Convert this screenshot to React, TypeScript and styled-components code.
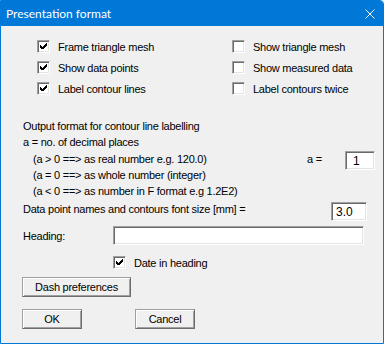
import React from 'react'
import styled, { createGlobalStyle } from 'styled-components'

const GlobalStyle = createGlobalStyle`
  html, body {
    margin: 0;
    padding: 0;
    background: #ffffff;
  }
  body {
    font-family: "Liberation Sans", Arial, sans-serif;
    font-size: 11px;
    letter-spacing: -0.25px;
    color: #000;
  }
`

const Window = styled.div`
  width: 384px;
  height: 344px;
  box-sizing: border-box;
  border: 1px solid #0078d7;
  border-top-right-radius: 4px;
  overflow: hidden;
  background: #f0f0f0;
  display: flex;
  flex-direction: column;
`

const TitleBar = styled.div`
  height: 25px;
  flex: none;
  background: #0078d7;
  color: #fff;
  display: flex;
  align-items: center;
  justify-content: space-between;
  padding: 0 8px 0 5px;
  font-family: Lato, "Noto Sans", sans-serif;
  font-size: 12px;
  letter-spacing: 0;
`

const CloseIcon = styled.svg`
  width: 10px;
  height: 10px;
  display: block;
`

const Body = styled.div`
  display: flex;
  flex-direction: column;
  padding: 10px 0 0 21px;
`

const CheckGrid = styled.div`
  display: grid;
  grid-template-columns: 195px auto;
  grid-auto-rows: 21px;
  padding-left: 15px;
`

const CheckItem = styled.label`
  display: flex;
  align-items: center;
  gap: 8px;
  white-space: nowrap;
`

const Box = styled.span`
  width: 13px;
  height: 13px;
  flex: none;
  box-sizing: border-box;
  background: #fff;
  border: 1px solid;
  border-color: #a0a0a0 #fff #fff #a0a0a0;
  box-shadow: inset 1px 1px #696969, inset -1px -1px #e3e3e3;
  display: flex;
  align-items: center;
  justify-content: center;
`

const TextBlock = styled.div`
  display: flex;
  flex-direction: column;
  margin-top: 19px;
`

const Line = styled.div<{ $h: number; $indent?: number }>`
  height: ${p => p.$h}px;
  line-height: ${p => p.$h}px;
  padding-left: ${p => p.$indent ?? 1}px;
  white-space: nowrap;
`

const ParamRow = styled.div`
  display: grid;
  grid-template-columns: 274px 38px 30px;
  height: 17px;
  line-height: 17px;
  padding-left: 11px;
  white-space: nowrap;
`

const SizeRow = styled.div`
  display: grid;
  grid-template-columns: 308px 36px;
  height: 19px;
  line-height: 19px;
  padding-left: 1px;
  white-space: nowrap;
`

const HeadingRow = styled.div`
  display: grid;
  grid-template-columns: 90px 251px;
  align-items: center;
  height: 19px;
  margin-top: 7px;
  padding-left: 1px;
`

const DateRow = styled.div`
  display: flex;
  height: 21px;
  margin-top: 7px;
  padding-left: 91px;
`

const Field = styled.input<{ $w?: number; $shift?: number; $pad?: number }>`
  width: ${p => (p.$w ? `${p.$w}px` : '100%')};
  height: 19px;
  margin: ${p => p.$shift ?? 0}px 0 0 0;
  align-self: start;
  box-sizing: border-box;
  background: #fff;
  border: 1px solid;
  border-color: #a0a0a0 #fff #fff #a0a0a0;
  box-shadow: inset 1px 1px #696969, inset -1px -1px #e3e3e3;
  padding: 0 0 0 ${p => p.$pad ?? 4}px;
  font-family: "Liberation Sans", Arial, sans-serif;
  font-size: 12px;
  color: #000;
  outline: none;
`

const Button = styled.button<{ $w: number }>`
  width: ${p => p.$w}px;
  height: 20px;
  box-sizing: border-box;
  background: #f0f0f0;
  border: 1px solid #6d6d6d;
  border-top-color: #a0a0a0;
  border-left-color: #a0a0a0;
  box-shadow: inset 1px 1px #fff, inset -1px -1px #a0a0a0;
  padding: 0;
  font-family: "Liberation Sans", Arial, sans-serif;
  font-size: 11px;
  letter-spacing: -0.25px;
  color: #000;
`

const DashButton = styled(Button)`
  margin-top: 4px;
`

const ButtonRow = styled.div`
  display: flex;
  gap: 53px;
  margin-top: 12px;
`

function Check({ checked, children }: { checked?: boolean; children?: React.ReactNode }) {
  return (
    <CheckItem>
      <Box>
        {checked && (
          <svg width="7" height="7" viewBox="0 0 7 7" shapeRendering="crispEdges">
            <path d="M0 2h1v1h-1zM0 3h2v1h-2zM0 4h3v1h-3zM1 5h3v1h-3zM2 6h1v-3h1v-1h1v-1h1v-1h1v3h-1v1h-1v1h-1v1h-2z" fill="#000" />
          </svg>
        )}
      </Box>
      {children}
    </CheckItem>
  )
}

export default function App() {
  return (
    <>
      <GlobalStyle />
      <Window>
        <TitleBar>
          <span>Presentation format</span>
          <CloseIcon viewBox="0 0 10 10">
            <path d="M0.5 0.5L9.5 9.5M9.5 0.5L0.5 9.5" stroke="#fff" strokeWidth="1" />
          </CloseIcon>
        </TitleBar>
        <Body>
          <CheckGrid>
            <Check checked>Frame triangle mesh</Check>
            <Check>Show triangle mesh</Check>
            <Check checked>Show data points</Check>
            <Check>Show measured data</Check>
            <Check checked>Label contour lines</Check>
            <Check>Label contours twice</Check>
          </CheckGrid>
          <TextBlock>
            <Line $h={16}>Output format for contour line labelling</Line>
            <Line $h={17}>a = no. of decimal places</Line>
            <ParamRow>
              <span>(a &gt; 0 ==&gt; as real number e.g. 120.0)</span>
              <span>a =</span>
              <Field $w={30} $pad={7} defaultValue="1" readOnly />
            </ParamRow>
            <Line $h={15} $indent={11}>(a = 0 ==&gt; as whole number (integer)</Line>
            <Line $h={17} $indent={11}>(a &lt; 0 ==&gt; as number in F format e.g 1.2E2)</Line>
            <SizeRow>
              <span>Data point names and contours font size [mm] =</span>
              <Field $w={36} $shift={2} defaultValue="3.0" readOnly />
            </SizeRow>
          </TextBlock>
          <HeadingRow>
            <span>Heading:</span>
            <Field defaultValue="" readOnly />
          </HeadingRow>
          <DateRow>
            <Check checked>Date in heading</Check>
          </DateRow>
          <DashButton $w={109}>Dash preferences</DashButton>
          <ButtonRow>
            <Button $w={60}>OK</Button>
            <Button $w={60}>Cancel</Button>
          </ButtonRow>
        </Body>
      </Window>
    </>
  )
}
